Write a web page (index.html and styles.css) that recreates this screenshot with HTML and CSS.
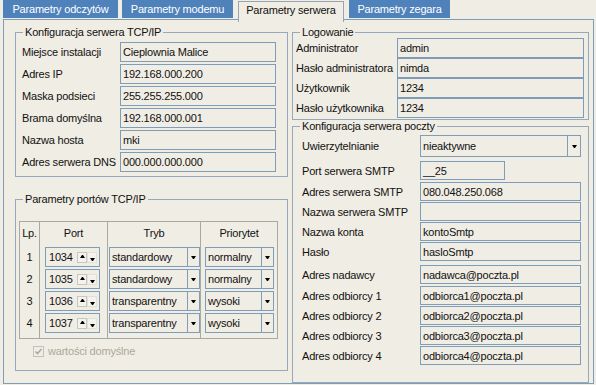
FILE: index.html
```html
<!DOCTYPE html>
<html lang="pl">
<head>
    <meta charset="UTF-8">
    <title>Parametry serwera</title>
    <link rel="stylesheet" href="styles.css">
</head>
<body>
<div class="tabs">
    <div class="tab tab--reads">Parametry odczytów</div>
    <div class="tab tab--modem">Parametry modemu</div>
    <div class="tab tab--server tab--active">Parametry serwera</div>
    <div class="tab tab--clock">Parametry zegara</div>
</div>
<div class="panel">
    <div class="column column--left">
        <fieldset class="group group--tcp">
            <legend class="group__legend">Konfiguracja serwera TCP/IP</legend>
            <div class="rows rows--tcp">
                <div class="row"><span class="row__label">Miejsce instalacji</span><div class="field">Cieplownia Malice</div></div>
                <div class="row"><span class="row__label">Adres IP</span><div class="field">192.168.000.200</div></div>
                <div class="row"><span class="row__label">Maska podsieci</span><div class="field">255.255.255.000</div></div>
                <div class="row"><span class="row__label">Brama domyślna</span><div class="field">192.168.000.001</div></div>
                <div class="row"><span class="row__label">Nazwa hosta</span><div class="field">mki</div></div>
                <div class="row"><span class="row__label">Adres serwera DNS</span><div class="field">000.000.000.000</div></div>
            </div>
        </fieldset>
        <fieldset class="group group--ports">
            <legend class="group__legend">Parametry portów TCP/IP</legend>
            <table class="ports">
                <thead>
                <tr>
                    <th class="ports__lp">Lp.</th>
                    <th class="ports__port">Port</th>
                    <th class="ports__mode">Tryb</th>
                    <th class="ports__prio">Priorytet</th>
                </tr>
                </thead>
                <tbody>
                <tr>
                    <td class="ports__num">1</td>
                    <td class="ports__cell-port"><div class="spin"><span class="spin__value">1034</span><span class="spin__btn spin__btn--up"></span><span class="spin__btn spin__btn--down"></span></div></td>
                    <td class="ports__cell-mode"><div class="combo combo--mode"><span class="combo__value">standardowy</span><span class="combo__btn"></span></div></td>
                    <td class="ports__cell-prio"><div class="combo combo--prio"><span class="combo__value">normalny</span><span class="combo__btn"></span></div></td>
                </tr>
                <tr>
                    <td class="ports__num">2</td>
                    <td class="ports__cell-port"><div class="spin"><span class="spin__value">1035</span><span class="spin__btn spin__btn--up"></span><span class="spin__btn spin__btn--down"></span></div></td>
                    <td class="ports__cell-mode"><div class="combo combo--mode"><span class="combo__value">standardowy</span><span class="combo__btn"></span></div></td>
                    <td class="ports__cell-prio"><div class="combo combo--prio"><span class="combo__value">normalny</span><span class="combo__btn"></span></div></td>
                </tr>
                <tr>
                    <td class="ports__num">3</td>
                    <td class="ports__cell-port"><div class="spin"><span class="spin__value">1036</span><span class="spin__btn spin__btn--up"></span><span class="spin__btn spin__btn--down"></span></div></td>
                    <td class="ports__cell-mode"><div class="combo combo--mode"><span class="combo__value">transparentny</span><span class="combo__btn"></span></div></td>
                    <td class="ports__cell-prio"><div class="combo combo--prio"><span class="combo__value">wysoki</span><span class="combo__btn"></span></div></td>
                </tr>
                <tr class="ports__last">
                    <td class="ports__num">4</td>
                    <td class="ports__cell-port"><div class="spin"><span class="spin__value">1037</span><span class="spin__btn spin__btn--up"></span><span class="spin__btn spin__btn--down"></span></div></td>
                    <td class="ports__cell-mode"><div class="combo combo--mode"><span class="combo__value">transparentny</span><span class="combo__btn"></span></div></td>
                    <td class="ports__cell-prio"><div class="combo combo--prio"><span class="combo__value">wysoki</span><span class="combo__btn"></span></div></td>
                </tr>
                </tbody>
            </table>
            <div class="check">
                <span class="check__box">
                    <svg width="9" height="9" viewBox="0 0 9 9"><path d="M1.5 4.5 L3.5 6.5 L7.5 2" fill="none" stroke="#a9a9a9" stroke-width="1.6"/></svg>
                </span>
                <span class="check__label">wartości domyślne</span>
            </div>
        </fieldset>
    </div>
    <div class="column column--right">
        <fieldset class="group group--login">
            <legend class="group__legend">Logowanie</legend>
            <div class="rows rows--login">
                <div class="row"><span class="row__label">Administrator</span><div class="field">admin</div></div>
                <div class="row"><span class="row__label">Hasło administratora</span><div class="field">nimda</div></div>
                <div class="row"><span class="row__label">Użytkownik</span><div class="field">1234</div></div>
                <div class="row"><span class="row__label">Hasło użytkownika</span><div class="field">1234</div></div>
            </div>
        </fieldset>
        <fieldset class="group group--mail">
            <legend class="group__legend">Konfiguracja serwera poczty</legend>
            <div class="rows rows--mail">
                <div class="row row--tall"><span class="row__label">Uwierzytelnianie</span><div class="combo combo--auth"><span class="combo__value">nieaktywne</span><span class="combo__btn"></span></div></div>
                <div class="row row--gap3"><span class="row__label">Port serwera SMTP</span><div class="field field--short">__25</div></div>
                <div class="row row--gap1"><span class="row__label">Adres serwera SMTP</span><div class="field">080.048.250.068</div></div>
                <div class="row"><span class="row__label">Nazwa serwera SMTP</span><div class="field"></div></div>
                <div class="row"><span class="row__label">Nazwa konta</span><div class="field">kontoSmtp</div></div>
                <div class="row"><span class="row__label">Hasło</span><div class="field">hasloSmtp</div></div>
                <div class="row row--gap3"><span class="row__label">Adres nadawcy</span><div class="field">nadawca@poczta.pl</div></div>
                <div class="row row--gap1"><span class="row__label">Adres odbiorcy 1</span><div class="field">odbiorca1@poczta.pl</div></div>
                <div class="row"><span class="row__label">Adres odbiorcy 2</span><div class="field">odbiorca2@poczta.pl</div></div>
                <div class="row"><span class="row__label">Adres odbiorcy 3</span><div class="field">odbiorca3@poczta.pl</div></div>
                <div class="row"><span class="row__label">Adres odbiorcy 4</span><div class="field">odbiorca4@poczta.pl</div></div>
            </div>
        </fieldset>
    </div>
</div>
</body>
</html>
```

FILE: styles.css
```css
* {
    box-sizing: border-box;
}
html, body {
    margin: 0;
    padding: 0;
}
body {
    width: 596px;
    height: 385px;
    overflow: hidden;
    background-color: #f0ede4;
    font-family: "Liberation Sans", Arial, sans-serif;
    font-size: 11px;
    letter-spacing: -0.2px;
    color: #111;
}

/* tabs */
.tabs {
    position: relative;
    z-index: 1;
    display: flex;
    align-items: flex-start;
    gap: 4px;
    height: 19px;
    padding-left: 3px;
}
.tab {
    height: 18px;
    line-height: 18px;
    text-align: center;
    background-color: #4f82ba;
    color: #fff;
}
.tab--reads { width: 115px; }
.tab--modem { width: 111px; }
.tab--server { width: 106px; }
.tab--clock { width: 101px; }
.tab--active {
    height: 21px;
    margin: 1px 1px 0;
    line-height: 17px;
    background-color: #f0ede4;
    color: #111;
    border: 1px solid #98a4b0;
    border-bottom: none;
}

/* main panel */
.panel {
    display: flex;
    gap: 4px;
    height: 365px;
    margin: 0 2px 0 3px;
    padding: 6px 4px 0 11px;
    border: 1px solid #7f9db9;
}
.column {
    display: flex;
    flex-direction: column;
}
.column--left { width: 273px; }
.column--right { width: 297px; }

/* group boxes */
.group {
    margin: 0;
    min-width: 0;
    border: 1px solid #95a8bc;
}
.group__legend {
    padding: 0 2px;
    line-height: 13px;
}
.group--tcp {
    padding: 3px 11px 4px 6px;
}
.group--tcp .group__legend { margin-left: 1px; }
.group--ports {
    margin-top: 16px;
    padding: 15px 9px 13px 3px;
}
.group--ports .group__legend { margin-left: 4px; }
.group--login {
    padding: 0 4px 1px 3px;
}
.group--login .group__legend { margin-left: 4px; }
.group--mail {
    flex: 1;
    padding: 2px 7px 6px 9px;
}
.group--mail .group__legend { margin-left: -2px; }

/* label + field rows */
.rows {
    display: flex;
    flex-direction: column;
}
.rows--tcp { gap: 2px; }
.rows--login { margin-top: -1px; }
.rows--mail { gap: 1px; }
.row {
    display: flex;
    align-items: center;
    height: 20px;
}
.rows--mail .row { height: 19px; }
.rows--mail .row--tall { height: 22px; }
.row--gap3 { margin-top: 3px; }
.row--gap1 { margin-top: 1px; }
.row__label {
    flex: none;
    white-space: nowrap;
}
.rows--tcp .row__label { width: 98px; }
.rows--login .row__label { width: 101px; }
.rows--mail .row__label { width: 118px; }

.field {
    flex: 1;
    height: 100%;
    padding: 0 2px;
    line-height: 18px;
    white-space: nowrap;
    overflow: hidden;
    border: 1px solid #7f9db9;
    background-color: #f0ede4;
}
.field--short {
    flex: none;
    width: 85px;
}

/* combo boxes */
.combo {
    display: flex;
    height: 20px;
    border: 1px solid #7f9db9;
    background-color: #f0ede4;
}
.combo__value {
    flex: 1;
    padding: 0 2px;
    line-height: 18px;
    white-space: nowrap;
    overflow: hidden;
}
.combo__btn {
    display: flex;
    align-items: center;
    justify-content: center;
    width: 12px;
    border-left: 1px solid #7f9db9;
}
.combo__btn::after {
    content: "";
    width: 1px;
    height: 0;
    border-left: 2px solid transparent;
    border-right: 2px solid transparent;
    border-top: 3px solid #000;
}
.combo--auth {
    flex: 1;
    height: 100%;
}
.combo--auth .combo__value { line-height: 20px; }
.combo--auth .combo__btn { width: 13px; }
.combo--mode { width: 91px; }
.combo--prio { width: 69px; }

/* ports table */
.ports {
    table-layout: fixed;
    width: 259px;
    border-collapse: separate;
    border-spacing: 0;
    border: 1px solid #a9a9a4;
}
.ports th,
.ports td {
    padding: 0;
    border-left: 1px solid #a9a9a4;
}
.ports th:first-child,
.ports td:first-child {
    border-left: none;
}
.ports th {
    height: 25px;
    padding-bottom: 3px;
    font-weight: normal;
    text-align: center;
    vertical-align: middle;
}
.ports__lp { width: 19px; }
.ports__port { width: 68px; }
.ports__mode { width: 93px; }
.ports__prio { width: 77px; }
.ports td {
    height: 22px;
    padding-bottom: 2px;
    vertical-align: top;
}
.ports__last td {
    height: 25px;
    padding-bottom: 5px;
}
.ports__num {
    line-height: 20px;
    text-align: center;
}
.ports td.ports__cell-port { padding-left: 5px; }
.ports td.ports__cell-mode { padding-left: 1px; }
.ports td.ports__cell-prio { padding-left: 4px; }

/* spinner */
.spin {
    display: flex;
    align-items: center;
    width: 55px;
    height: 20px;
    padding: 0 2px 0 3px;
    border: 1px solid #7f9db9;
}
.spin__value {
    flex: 1;
}
.spin__btn {
    display: flex;
    justify-content: center;
    width: 10px;
    height: 11px;
    border: 1px solid #c9c7bd;
    background-color: #f4f2ec;
}
.spin__btn--up {
    align-items: flex-start;
    padding-top: 2px;
}
.spin__btn--up::after {
    content: "";
    width: 1px;
    height: 0;
    border-left: 2px solid transparent;
    border-right: 2px solid transparent;
    border-bottom: 3px solid #000;
}
.spin__btn--down {
    align-items: flex-end;
    padding-bottom: 1px;
    border-color: #e2e0d8;
}
.spin__btn--down::after {
    content: "";
    width: 1px;
    height: 0;
    border-left: 2px solid transparent;
    border-right: 2px solid transparent;
    border-top: 3px solid #000;
}

/* checkbox */
.check {
    display: flex;
    align-items: center;
    gap: 4px;
    height: 12px;
    margin: 6px 0 0 14px;
    color: #aca899;
}
.check__box {
    display: flex;
    align-items: center;
    justify-content: center;
    width: 11px;
    height: 11px;
    border: 1px solid #c4c2b8;
    background-color: #f0ede4;
}
```
